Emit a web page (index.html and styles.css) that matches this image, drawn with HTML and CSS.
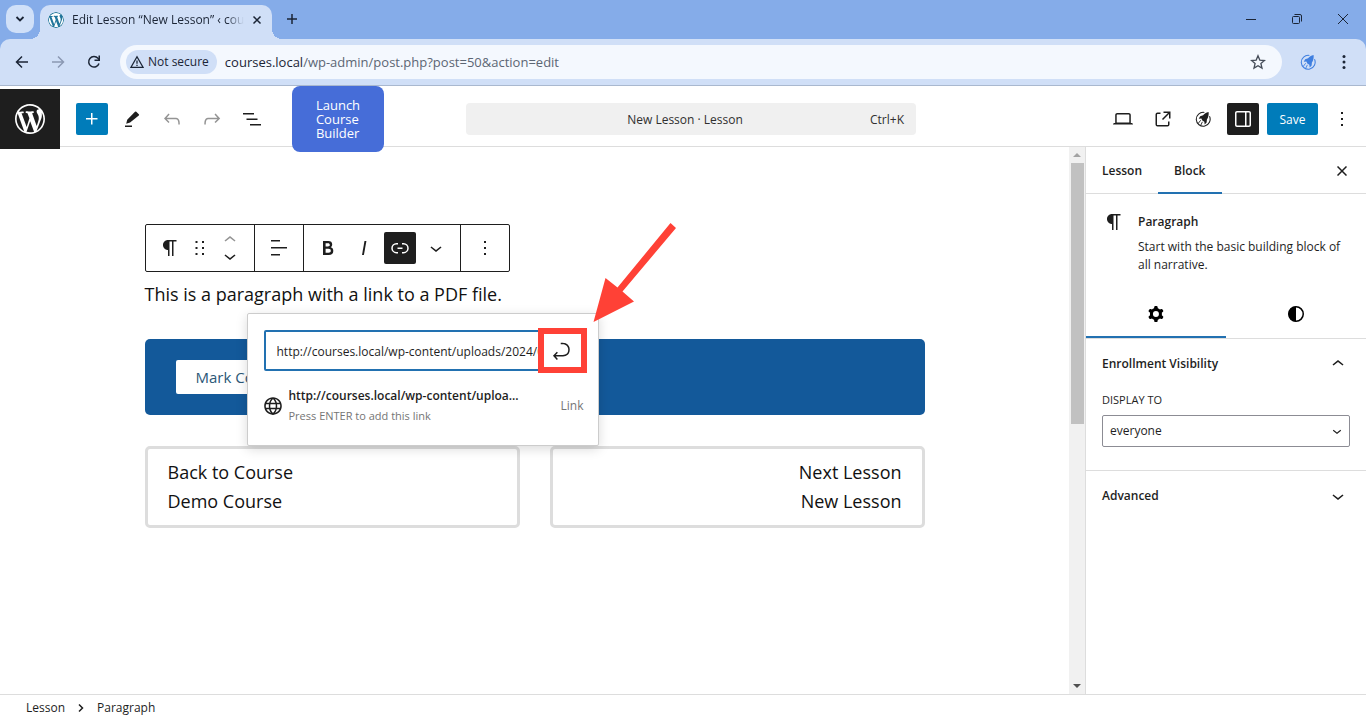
FILE: index.html
```html
<!DOCTYPE html>
<html lang="en">
<head>
<meta charset="utf-8">
<title>Edit Lesson “New Lesson” ‹ courses</title>
<link rel="stylesheet" href="styles.css">
</head>
<body>
<svg class="defs" aria-hidden="true">
  <symbol id="wp" viewBox="0 0 20 20"><path d="M20 10c0-5.51-4.49-10-10-10C4.48 0 0 4.49 0 10c0 5.52 4.48 10 10 10 5.51 0 10-4.48 10-10zM7.78 15.37L4.37 6.22c.55-.02 1.17-.08 1.17-.08.5-.06.44-1.13-.06-1.11 0 0-1.45.11-2.37.11-.18 0-.37 0-.58-.01C4.12 2.69 6.87 1.11 10 1.11c2.33 0 4.45.87 6.05 2.34-.68-.11-1.65.39-1.65 1.58 0 .74.45 1.36.9 2.1.35.61.55 1.36.55 2.46 0 1.49-1.4 5-1.4 5l-3.03-8.37c.54-.02.82-.17.82-.17.5-.05.44-1.25-.06-1.22 0 0-1.44.12-2.38.12-.87 0-2.33-.12-2.33-.12-.5-.03-.56 1.2-.06 1.22l.92.08 1.26 3.41zM17.41 10c.24-.64.74-1.87.43-4.25.7 1.29 1.05 2.71 1.05 4.25 0 3.29-1.73 6.24-4.4 7.78.97-2.59 1.94-5.2 2.92-7.78zM6.1 18.09C3.12 16.65 1.11 13.53 1.11 10c0-1.3.23-2.48.72-3.59C3.25 10.3 4.67 14.2 6.1 18.09zm4.03-6.63l2.58 6.98c-.86.29-1.76.45-2.71.45-.79 0-1.57-.11-2.29-.33.81-2.38 1.62-4.74 2.42-7.1z"/></symbol>
  <symbol id="down" viewBox="0 0 24 24"><path d="M17.5 11.6L12 16l-5.5-4.4.9-1.2L12 14l4.5-3.6 1 1.2z"/></symbol>
  <symbol id="up" viewBox="0 0 24 24"><path d="M6.5 12.4L12 8l5.5 4.4-.9 1.2L12 10l-4.5 3.6-1-1.2z"/></symbol>
  <symbol id="more" viewBox="0 0 24 24"><path d="M13 19h-2v-2h2v2zm0-6h-2v-2h2v2zm0-6h-2V5h2v2z"/></symbol>
  <symbol id="para" viewBox="0 0 24 24"><path d="m9.996 14v-.225l.004 0v6.225h1.5v-14.5h2.5v14.5h1.5v-14.5h3v-1.5h-8.504c-2.761 0-5 2.239-5 5 0 2.761 2.239 5 5 5z"/></symbol>
  <symbol id="rocket" viewBox="0 0 18 18"><path d="M16.300 6A7.800 7.800 0 1 1 10.500 1.600" fill="none" stroke="currentColor" stroke-width="1.200"/><path d="M15.300 1c-2.800.4-4.900 1.800-6.200 3.800L5.800 6 4.200 8.600l3-.2 1 2.300 2.300 1.300.4 3.200 2.200-2.300.3-3.400c1.600-2.400 2.300-5.200 1.900-8.500z"/><path d="M6.400 10.400 3.600 14M8.300 12.200 6.500 16" fill="none" stroke="currentColor" stroke-width="1"/></symbol>
</svg>

<div class="tabstrip">
  <button class="tab-search" aria-label="Search tabs"><svg width="10" height="10" viewBox="0 0 10 10"><path d="M1.500 3 5 6.500 8.500 3" class="ln w2"/></svg></button>
  <div class="tab">
    <svg class="favicon" width="16" height="16"><use href="#wp"/></svg>
    <span class="tab-title">Edit Lesson “New Lesson” ‹ cou</span>
    <button aria-label="Close tab"><svg width="10" height="10" viewBox="0 0 10 10"><path d="m1.500 1.500 7 7m0-7-7 7" class="ln w15"/></svg></button>
  </div>
  <button class="new-tab" aria-label="New tab"><svg width="12" height="12" viewBox="0 0 12 12"><path d="M6 1v10M1 6h10" class="ln w15"/></svg></button>
  <div class="window-controls">
    <button aria-label="Minimize"><svg width="12" height="12" viewBox="0 0 12 12"><path d="M1 6.500h10" class="ln"/></svg></button>
    <button aria-label="Restore"><svg width="12" height="12" viewBox="0 0 12 12"><rect x="1.500" y="3.500" width="7" height="7" rx="1" class="ln"/><path d="M3.500 1.500H9q1.500 0 1.500 1.500v5.500" class="ln"/></svg></button>
    <button aria-label="Close"><svg width="12" height="12" viewBox="0 0 12 12"><path d="m1 1 10 10M11 1 1 11" class="ln"/></svg></button>
  </div>
</div>

<div class="browser-frame">
<div class="browser-bar">
  <button aria-label="Back"><svg width="16" height="16" viewBox="0 0 16 16"><path d="M14 8H3M8 2.500 2.500 8 8 13.500" class="ln w15"/></svg></button>
  <button class="muted" aria-label="Forward"><svg width="16" height="16" viewBox="0 0 16 16"><path d="M2 8h11M8 2.500 13.500 8 8 13.500" class="ln w15"/></svg></button>
  <button aria-label="Reload"><svg width="16" height="16" viewBox="0 0 16 16"><path d="M13 9.500A5.300 5.300 0 1 1 12 4.300L13.500 6" class="ln w15"/><path d="M14 1.500V7H8.500V5.500h4v-4z" fill="currentColor"/></svg></button>
  <div class="omnibox">
    <button class="not-secure"><svg width="14" height="14" viewBox="0 0 14 14"><path d="M7 1.700 13 12.300H1zM7 5.500v3.200M7 9.700v1.200" class="ln w13"/></svg>Not secure</button>
    <a class="url" href="#"><span>courses.local</span>/wp-admin/post.php?post=50&amp;action=edit</a>
    <button class="bookmark" aria-label="Bookmark this page"><svg width="16" height="16" viewBox="0 0 16 16"><path d="m8 1.800 1.800 4.300 4.700.4-3.600 3 1.100 4.600L8 11.700l-4 2.400 1.100-4.600-3.600-3 4.700-.4z" class="ln w13"/></svg></button>
  </div>
  <button class="ext" aria-label="Extension"><svg width="16" height="16"><use href="#rocket"/></svg></button>
  <button class="menu" aria-label="Browser menu"><svg width="16" height="16" viewBox="0 0 16 16"><circle cx="8" cy="2.500" r="1.500"/><circle cx="8" cy="8" r="1.500"/><circle cx="8" cy="13.500" r="1.500"/></svg></button>
</div>
</div>

<header class="editor-header">
  <div class="tools">
    <a class="logo" href="#" aria-label="View posts"><svg width="30" height="30"><use href="#wp"/></svg></a>
    <button class="ib primary" aria-label="Add block"><svg width="24" height="24" viewBox="0 0 24 24"><path d="M11 12.500V17.500H12.500V12.500H17.500V11H12.500V6H11V11H6V12.500H11Z"/></svg></button>
    <button class="ib" aria-label="Tools"><svg width="24" height="24" viewBox="0 0 24 24"><path d="m18.800 7.200-2.500-2.500q-.6-.5-1.300.1L7.200 12.800l-1 3.900 3.900-1.100 8.700-7.100q.7-.7 0-1.300ZM12 18.500H5V20h7v-1.500Z"/></svg></button>
    <button class="ib muted" aria-label="Undo"><svg width="24" height="24" viewBox="0 0 24 24"><path d="M18.300 11.700c-.6-.6-1.400-.9-2.300-.9H6.700l2.900-3.300-1.100-1-4.500 5L8.500 16l1-1-2.700-2.700H16c.5 0 .9.200 1.300.5 1 1 1 3.400 1 4.500v.3h1.500v-.2c0-1.500 0-4.300-1.500-5.700z"/></svg></button>
    <button class="ib muted" aria-label="Redo"><svg width="24" height="24" viewBox="0 0 24 24"><path d="M15.600 6.500l-1.100 1 2.900 3.300H8c-.9 0-1.700.3-2.300.9-1.400 1.500-1.400 4.200-1.400 5.600v.2h1.500v-.3c0-1.100 0-3.500 1-4.500.3-.3.700-.5 1.300-.5h9.200L14.500 15l1.100 1.100 4.600-4.600-4.600-5z"/></svg></button>
    <button class="ib" aria-label="Document overview"><svg width="24" height="24" viewBox="0 0 24 24"><path d="M3 6h11v1.500H3V6Zm3.500 5.500h11V13h-11v-1.500ZM21 17H10v1.500h11V17Z"/></svg></button>
    <button class="launch">Launch Course Builder</button>
  </div>
  <button class="command"><span></span><span>New Lesson · Lesson</span><span class="keys">Ctrl+K</span></button>
  <div class="settings">
    <button class="ib" aria-label="View"><svg width="24" height="24" viewBox="0 0 24 24"><path d="M20.500 16h-.7V8c0-1.100-.9-2-2-2H6.200c-1.100 0-2 .9-2 2v8h-.7c-.8 0-1.500.7-1.500 1.500h20c0-.8-.7-1.500-1.500-1.500zM5.700 8c0-.3.200-.5.500-.5h11.600c.3 0 .5.200.5.500v7.600H5.700V8z"/></svg></button>
    <button class="ib" aria-label="View lesson"><svg width="24" height="24" viewBox="0 0 24 24"><path d="M19.500 4.500h-7V6h4.440l-5.970 5.970 1.060 1.060L18 7.060v4.440h1.500v-7Zm-13 1a2 2 0 0 0-2 2v10a2 2 0 0 0 2 2h10a2 2 0 0 0 2-2v-3H17v3a.5.5 0 0 1-.5.5h-10a.5.5 0 0 1-.5-.5v-10a.5.5 0 0 1 .5-.5h3V5.500h-3Z"/></svg></button>
    <button class="ib" aria-label="Course settings"><svg width="16" height="16"><use href="#rocket"/></svg></button>
    <button class="ib pressed" aria-label="Settings"><svg width="24" height="24" viewBox="0 0 24 24"><path d="M18 4H6c-1.100 0-2 .9-2 2v12c0 1.100.9 2 2 2h12c1.100 0 2-.9 2-2V6c0-1.100-.9-2-2-2zm-4 14.500H6c-.3 0-.5-.2-.5-.5V6c0-.3.2-.5.5-.5h8v13zm4.500-.5c0 .3-.2.500-.5.500h-2.500v-13H18c.3 0 .5.200.5.500v12z"/></svg></button>
    <button class="save">Save</button>
    <button class="ib" aria-label="Options"><svg width="24" height="24"><use href="#more"/></svg></button>
  </div>
</header>

<div class="workspace">
  <main class="canvas">
    <div class="content">
      <div class="block-toolbar">
        <div class="group movers">
          <button aria-label="Paragraph"><svg width="24" height="24"><use href="#para"/></svg></button>
          <button aria-label="Drag"><svg width="24" height="24" viewBox="0 0 24 24"><path d="M7.500 5h2v2h-2zm6.500 0h2v2h-2zM7.500 11h2v2h-2zm6.500 0h2v2h-2zM7.500 17h2v2h-2zm6.500 0h2v2h-2z"/></svg></button>
          <span class="updown"><button class="muted" aria-label="Move up"><svg width="24" height="24"><use href="#up"/></svg></button><button aria-label="Move down"><svg width="24" height="24"><use href="#down"/></svg></button></span>
        </div>
        <div class="group single"><button aria-label="Align text"><svg width="24" height="24" viewBox="0 0 24 24"><path d="M13 5.500H4V4h9v1.500Zm7 7H4V11h16v1.500Zm-7 7H4V18h9v1.500Z"/></svg></button></div>
        <div class="group format">
          <button aria-label="Bold"><svg width="24" height="24" viewBox="0 0 24 24"><path d="M14.700 11.300c1-.6 1.500-1.600 1.500-3 0-2.300-1.300-3.400-4-3.400H7v14h5.800c1.400 0 2.500-.3 3.300-1 .8-.7 1.200-1.700 1.200-2.900.1-1.900-.8-3.100-2.600-3.700zm-5.100-4h2.300c.6 0 1.100.1 1.400.4.3.3.5.7.5 1.200s-.2 1-.5 1.200c-.3.300-.8.400-1.400.4H9.600V7.300zm4.600 9c-.4.300-1 .4-1.700.4H9.600v-3.900h2.900c.7 0 1.300.2 1.700.5.4.3.6.8.6 1.500s-.2 1.200-.6 1.500z"/></svg></button>
          <button aria-label="Italic"><svg width="24" height="24" viewBox="0 0 24 24"><path d="M12.500 5L10 19h1.900l2.500-14z"/></svg></button>
          <button class="pressed" aria-label="Link"><svg width="24" height="24" viewBox="0 0 24 24"><path d="M10 17.389H8.444A5.194 5.194 0 1 1 8.444 7H10v1.500H8.444a3.694 3.694 0 0 0 0 7.389H10v1.500ZM14 7h1.556a5.194 5.194 0 0 1 0 10.390H14v-1.500h1.556a3.694 3.694 0 0 0 0-7.390H14V7Zm-4.500 6h5v-1.500h-5V13Z"/></svg></button>
          <button aria-label="More formatting"><svg width="24" height="24"><use href="#down"/></svg></button>
        </div>
        <div class="group single"><button aria-label="Block options"><svg width="24" height="24"><use href="#more"/></svg></button></div>
      </div>
      <p class="paragraph">This is a paragraph with a link to a PDF file.</p>
      <div class="complete"><button>Mark Complete</button></div>
      <nav class="lesson-nav">
        <a href="#">Back to Course<br>Demo Course</a>
        <a href="#" class="next">Next Lesson<br>New Lesson</a>
      </nav>

      <div class="link-popover">
        <input type="text" aria-label="Link URL" value="http://courses.local/wp-content/uploads/2024/07/file.pdf">
        <button class="suggestion">
          <svg width="24" height="24" viewBox="0 0 24 24"><path d="M12 3.300c-4.800 0-8.800 3.900-8.800 8.800 0 4.800 3.900 8.800 8.800 8.800s8.800-3.900 8.800-8.800-4-8.800-8.800-8.800zm6.500 5.500h-2.600C15.400 7.300 14.800 6 14 5c2 .6 3.600 2 4.500 3.800zm.7 3.200c0 .6-.1 1.200-.2 1.800h-2.900c.1-.6.1-1.200.1-1.800s-.1-1.200-.1-1.800H19c.2.600.2 1.200.2 1.800zM12 18.700c-1-.7-1.800-1.900-2.300-3.500h4.600c-.5 1.600-1.300 2.900-2.300 3.500zm-2.600-4.900c-.1-.6-.1-1.100-.1-1.800 0-.6.1-1.200.1-1.800h5.200c.1.600.1 1.100.1 1.800s-.1 1.200-.1 1.800H9.400zM4.800 12c0-.6.1-1.200.2-1.800h2.900c-.1.600-.1 1.200-.1 1.800 0 .6.1 1.200.1 1.800H5c-.2-.6-.2-1.200-.2-1.800zM12 5.300c1 .7 1.800 1.900 2.300 3.500H9.700c.5-1.600 1.300-2.900 2.300-3.500zM10 5c-.8 1-1.400 2.300-1.800 3.800H5.500C6.400 7 8 5.600 10 5zM5.500 15.300h2.600c.4 1.500 1 2.800 1.800 3.700-1.800-.6-3.500-2-4.400-3.700zM14 19c.8-1 1.400-2.200 1.800-3.700h2.600C17.600 17 16 18.400 14 19z"/></svg>
          <span class="info"><strong>http://courses.local/wp-content/uploa...</strong><span>Press ENTER to add this link</span></span>
          <span class="kind">Link</span>
        </button>
        <button class="submit" aria-label="Submit"><svg width="24" height="24" viewBox="0 0 24 24"><path d="m6.734 16.106 2.176-2.380-1.093-1.028-3.846 4.158 3.846 4.157 1.093-1.027-2.176-2.380h2.811c1.125 0 2.250.030 3.374 0 1.428-.001 3.362-.250 4.963-1.277 1.660-1.065 2.868-2.906 2.868-5.859 0-2.479-1.327-4.896-3.650-5.930-1.820-.813-3.044-.800-4.806-.788l-.567.002v1.500c.184 0 .368 0 .553-.002 1.820-.007 2.704-.014 4.210.657 1.854.827 2.760 2.657 2.760 4.561 0 2.472-.973 3.824-2.178 4.596-1.258.807-2.864 1.040-4.163 1.040h-.020c-1.115.030-2.229 0-3.344 0H6.734Z"/></svg></button>
        <svg class="arrow" width="83" height="100" viewBox="0 0 83 100"><path d="M77.500 0 83 5 29.500 68.500 41 78.500.5 99 12.500 55 24.500 64.500z"/></svg>
      </div>
    </div>
  </main>
  <div class="scrollbar" aria-hidden="true">
    <svg width="8" height="4" viewBox="0 0 8 4" class="off"><path d="M0 4 4 0l4 4z"/></svg>
    <div class="thumb"></div>
    <svg width="8" height="4" viewBox="0 0 8 4"><path d="M0 0l4 4 4-4z"/></svg>
  </div>
  <aside class="sidebar">
    <div class="side-tabs">
      <button>Lesson</button>
      <button class="active">Block</button>
      <button class="close" aria-label="Close settings"><svg width="10" height="10" viewBox="0 0 10 10"><path d="m.5.5 9 9m0-9-9 9" class="ln w15"/></svg></button>
    </div>
    <section class="block-card">
      <svg width="24" height="24"><use href="#para"/></svg>
      <div><h2>Paragraph</h2><p>Start with the basic building block of all narrative.</p></div>
    </section>
    <div class="icon-tabs">
      <button class="active" aria-label="Block settings"><svg width="24" height="24" viewBox="0 0 24 24"><path fill-rule="evenodd" d="M10.289 4.836A1 1 0 0111.275 4h1.306a1 1 0 01.987.836l.244 1.466c.787.260 1.503.679 2.108 1.218l1.393-.522a1 1 0 011.216.437l.653 1.130a1 1 0 01-.230 1.273l-1.148.944a6.025 6.025 0 010 2.435l1.149.946a1 1 0 01.230 1.272l-.653 1.130a1 1 0 01-1.216.437l-1.394-.522c-.605.540-1.320.958-2.108 1.218l-.244 1.466a1 1 0 01-.987.836h-1.306a1 1 0 01-.986-.836l-.244-1.466a5.995 5.995 0 01-2.108-1.218l-1.394.522a1 1 0 01-1.217-.436l-.653-1.131a1 1 0 01.230-1.272l1.149-.946a6.026 6.026 0 010-2.435l-1.148-.944a1 1 0 01-.230-1.272l.653-1.131a1 1 0 011.217-.437l1.393.522a5.994 5.994 0 012.108-1.218l.244-1.466zM14.929 12a3 3 0 11-6 0 3 3 0 016 0z"/></svg></button>
      <button aria-label="Styles"><svg width="24" height="24" viewBox="0 0 24 24"><circle cx="12" cy="12" r="7.250" fill="none" stroke="currentColor" stroke-width="1.500"/><path d="M12 4.500a7.500 7.500 0 0 0 0 15z"/></svg></button>
    </div>
    <section class="panel">
      <button class="panel-title">Enrollment Visibility<svg width="24" height="24"><use href="#up"/></svg></button>
      <div class="field">
        <label for="display-to">DISPLAY TO</label>
        <div class="select-wrap">
          <select id="display-to"><option>everyone</option></select>
          <svg width="18" height="18"><use href="#down"/></svg>
        </div>
      </div>
    </section>
    <section class="panel last">
      <button class="panel-title">Advanced<svg width="24" height="24"><use href="#down"/></svg></button>
    </section>
  </aside>
</div>

<footer class="breadcrumb">
  <button>Lesson</button>
  <svg width="6" height="10" viewBox="0 0 6 10"><path d="m1 1.500 3.500 3.500L1 8.500" class="ln w15"/></svg>
  <span>Paragraph</span>
</footer>
</body>
</html>
```
FILE: styles.css
```css
* { box-sizing: border-box; }
body {
  margin: 0;
  min-height: 100vh;
  display: flex;
  flex-direction: column;
  background: #fff;
  color: #1e1e1e;
  font: 12px/18px "Open Sans", "Noto Sans", sans-serif;
}
button, input, select { font: inherit; color: inherit; }
button {
  display: flex;
  align-items: center;
  justify-content: center;
  padding: 0;
  border: 0;
  background: none;
}
a { color: inherit; text-decoration: none; }
h2, p { margin: 0; }
svg { flex: none; display: block; fill: currentColor; }
.defs { position: absolute; width: 0; height: 0; }
.ln { fill: none; stroke: currentColor; stroke-width: 1; }
.w13 { stroke-width: 1.3; }
.w15 { stroke-width: 1.5; }
.w2 { stroke-width: 1.8; }
.muted { color: #949494; }

/* Browser frame */
.tabstrip {
  display: flex;
  height: 39px;
  padding: 5px 0 0 6px;
  background: #85ace9;
  color: #1b2536;
}
.tab-search { width: 28px; height: 28px; border-radius: 10px; background: #d0e0f8; }
.tab {
  position: relative;
  display: flex;
  align-items: center;
  gap: 8px;
  width: 232px;
  margin-left: 6px;
  padding: 0 10px 5px 8px;
  border-radius: 10px 10px 0 0;
  background: #d0dff7;
}
.tab::before, .tab::after {
  content: "";
  position: absolute;
  bottom: 0;
  width: 10px;
  height: 10px;
}
.tab::before { right: 100%; background: radial-gradient(circle at 0 0, transparent 10px, #d0dff7 10px); }
.tab::after { left: 100%; background: radial-gradient(circle at 100% 0, transparent 10px, #d0dff7 10px); }
.favicon { color: #21759b; border-radius: 50%; background: #fff; }
.tab-title {
  flex: 1;
  white-space: nowrap;
  mask-image: linear-gradient(90deg, #000 90%, transparent);
}
.tab button { width: 12px; height: 20px; }
.new-tab { width: 28px; height: 28px; margin-left: 6px; }
.window-controls { display: flex; height: 28px; margin-left: auto; }
.window-controls button { width: 46px; }
.browser-frame { background: #85ace9; }
.browser-bar {
  display: flex;
  align-items: center;
  height: 47px;
  padding: 0 8px;
  border-bottom: 1px solid #a9b8cf;
  border-radius: 10px 10px 0 0;
  background: #d0dff7;
  color: #1b2536;
}
.browser-bar > button { width: 28px; height: 28px; margin-right: 8px; }
.browser-bar > .muted { color: #8b99b3; }
.omnibox {
  flex: 1;
  display: flex;
  align-items: center;
  height: 34px;
  margin: 0 12px 0 4px;
  padding: 0 16px 0 6px;
  border-radius: 17px;
  background: #f4f8fe;
}
.not-secure {
  gap: 4px;
  height: 24px;
  padding: 0 8px 0 4px;
  border-radius: 12px;
  background: #d0dff7;
  font-weight: 500;
}
.url { flex: 1; margin-left: 8px; color: #5c6674; font-size: 13px; }
.url span { color: #1b2536; }
.bookmark { color: #454c58; }
.browser-bar > .ext { color: #3f7fe0; }
.browser-bar > .menu { margin-right: 0; }

/* Editor header */
.editor-header {
  position: relative;
  z-index: 2;
  display: grid;
  grid-template-columns: 1fr 450px 1fr;
  height: 61px;
  padding: 3px 0 0 16px;
  border-bottom: 1px solid #ddd;
}
.tools, .settings { display: flex; align-items: center; gap: 8px; height: 60px; }
.settings { justify-content: flex-end; padding-right: 8px; }
.logo {
  display: flex;
  align-items: center;
  justify-content: center;
  width: 60px;
  height: 60px;
  margin: 0 8px 0 -16px;
  background: #1e1e1e;
  color: #fff;
}
.ib { width: 32px; height: 32px; border-radius: 2px; }
.primary, .save { background: #007cba; color: #fff; }
.pressed { background: #1e1e1e; color: #fff; }
.launch {
  width: 92px;
  height: 66px;
  margin-left: 16px;
  padding: 0 24px;
  border-radius: 8px;
  background: #466dd8;
  color: #fff;
  font-size: 13px;
  line-height: 14px;
  text-align: left;
}
.command {
  display: grid;
  grid-template-columns: 1fr auto 1fr;
  align-self: start;
  height: 32px;
  margin-top: 14px;
  padding: 2px 12px 0 0;
  border-radius: 4px;
  background: #f0f0f0;
  color: #2f2f2f;
}
.keys { text-align: right; }
.save { width: 51px; height: 32px; padding-top: 2px; border-radius: 2px; }

/* Canvas */
.workspace { flex: 1; display: flex; }
.canvas { flex: 1; padding: 77px 24px 32px; }
.content { position: relative; max-width: 780px; margin: 0 auto; font-size: 18px; color: #111; }
.block-toolbar {
  display: flex;
  width: max-content;
  height: 48px;
  border: 1px solid #1e1e1e;
  border-radius: 2px;
  color: #1e1e1e;
}
.group { display: flex; align-items: center; justify-content: center; }
.group + .group { border-left: 1px solid #1e1e1e; }
.movers { width: 108px; gap: 6px; }
.updown { display: grid; }
.updown button { height: 16px; overflow: hidden; }
.single { width: 49px; }
.format { padding: 0 6px; }
.format button { width: 36px; height: 32px; }
.format .pressed { width: 32px; margin: 0 2px; border-radius: 2px; }
.paragraph { margin: 8px 0 30px; line-height: 29px; }
.complete { padding: 21px 31px; border-radius: 5px; background: #13599a; }
.complete button {
  height: 34px;
  padding: 0 20px;
  border-radius: 2px;
  background: #fff;
  color: #2b5877;
  font-size: 15px;
}
.lesson-nav { display: grid; grid-template-columns: 1fr 1fr; gap: 30px; margin-top: 31px; line-height: 29px; }
.lesson-nav a { padding: 9px 20px; border: 3px solid #ddd; border-radius: 5px; }
.lesson-nav .next { text-align: right; }

/* Link popover */
.link-popover {
  position: absolute;
  top: 89px;
  left: 102px;
  width: 352px;
  height: 133px;
  padding: 16px;
  border: 1px solid #ccc;
  border-radius: 2px;
  background: #fff;
  box-shadow: 0 3px 12px rgba(0, 0, 0, .15);
  color: #1e1e1e;
  font-size: 12px;
}
.link-popover input {
  display: block;
  width: 100%;
  height: 41px;
  padding: 2px 36px 0 11px;
  border: 2px solid #2271b1;
  border-radius: 2px;
  background: #fff;
}
.suggestion { gap: 4px; width: 100%; margin-top: 15px; text-align: left; }
.suggestion svg { margin-left: -3px; }
.info { display: grid; line-height: 20px; color: #757575; font-size: 11px; }
.info strong { color: #1e1e1e; font-size: 12px; font-weight: 600; }
.kind { margin: 0 -2px 0 auto; color: #757575; }
.submit {
  position: absolute;
  top: 14px;
  left: 290px;
  width: 49px;
  height: 45px;
  padding-right: 2px;
  border: 6px solid #ff4136;
  background: #fff;
}
.arrow { position: absolute; top: -91px; left: 345px; color: #ff4136; }

/* Scrollbar */
.scrollbar {
  display: flex;
  flex-direction: column;
  align-items: center;
  gap: 6px;
  width: 16px;
  padding: 6px 0;
  background: #f1f1f1;
  color: #505050;
}
.scrollbar .off { color: #a3a3a3; }
.thumb { width: 13px; height: 261px; margin-bottom: auto; background: #c1c1c1; }

/* Sidebar */
.sidebar { width: 281px; border-left: 1px solid #ddd; }
.side-tabs { display: flex; height: 47px; border-bottom: 1px solid #ddd; font-weight: 600; }
.side-tabs button { height: 47px; padding: 0 16px; }
.side-tabs .active { box-shadow: inset 0 -2px #2271b1; }
.side-tabs .close { width: 32px; margin: 0 8px 0 auto; padding: 0; }
.block-card { display: flex; gap: 12px; padding: 16px; }
.block-card h2 { margin-bottom: 4px; font-size: 12px; line-height: 24px; font-weight: 600; }
.icon-tabs { display: grid; grid-template-columns: 1fr 1fr; border-bottom: 1px solid #ddd; }
.icon-tabs button { height: 48px; color: #000; }
.icon-tabs .active { box-shadow: inset 0 -2px #2271b1; }
.panel { border-bottom: 1px solid #ddd; }
.panel.last { border-bottom: 0; }
.panel-title { justify-content: space-between; width: 100%; height: 50px; padding: 0 16px; font-weight: 600; }
.field { padding: 2px 16px 23px; }
.field label { display: block; margin-bottom: 6px; font-size: 11px; font-weight: 500; }
.select-wrap { display: grid; align-items: center; }
.select-wrap > * { grid-area: 1 / 1; }
.select-wrap svg { justify-self: end; margin-right: 4px; pointer-events: none; }
.field select {
  appearance: none;
  width: 100%;
  height: 32px;
  padding: 0 7px;
  border: 1px solid #8c8c94;
  border-radius: 2px;
  background: #fff;
}

/* Footer */
.breadcrumb {
  display: flex;
  align-items: center;
  gap: 13px;
  height: 25px;
  padding: 1px 26px 0;
  border-top: 1px solid #ddd;
}
```
